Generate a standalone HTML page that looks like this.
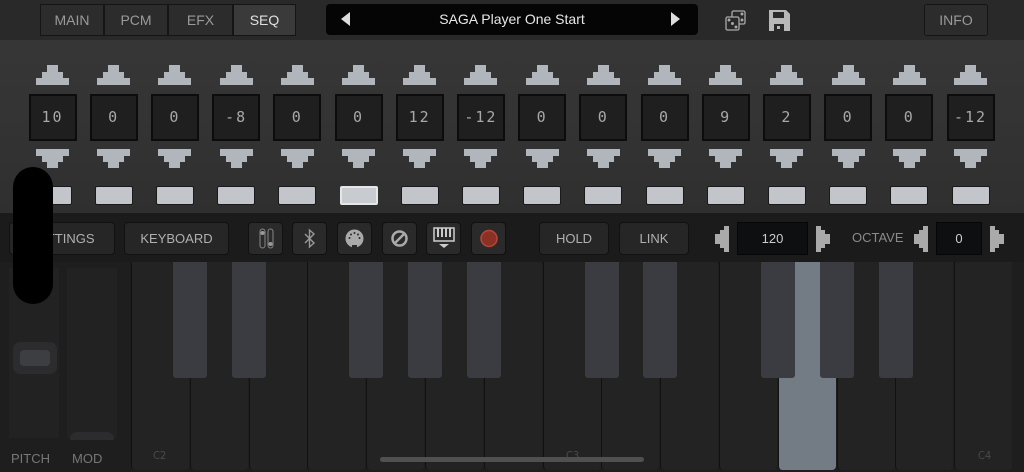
<!DOCTYPE html>
<html><head><style>
*{margin:0;padding:0;box-sizing:border-box}
body{width:1024px;height:472px;background:#1e1e1e;position:relative;overflow:hidden;font-family:"Liberation Sans",sans-serif}
.a{position:absolute}
.tab{position:absolute;top:4px;height:32px;background:#2c2c2c;border:1px solid #151515;color:#9a9a9a;font-size:14px;line-height:30px;text-align:center}
.btn{position:absolute;top:222px;height:33px;background:#262626;border:1px solid #111;border-radius:4px;color:#b0b0b0;font-size:13px;line-height:31px;text-align:center}
.ib{position:absolute;top:222px;width:35px;height:33px;background:#2a2a2a;border:1px solid #111;border-radius:4px}
.up,.dn{position:absolute;width:33px;height:20px}
.up i,.dn i{position:absolute;background:#b1b6bc;display:block}
.val{position:absolute;top:94px;width:48px;height:47px;background:#1f1f1f;border:2px solid #0c0c0c;color:#a8a8a8;font-family:"DejaVu Sans Mono",monospace;font-size:15px;letter-spacing:2px;line-height:43px;text-align:center}
.pad{position:absolute;top:186px;width:38px;height:19px;background:#c2c6ca;border:1px solid #1a1a1a;border-radius:2px}
.wk{position:absolute;top:262px;height:208px;width:58px;background:#232323;border-radius:0 0 4px 4px;border-left:1px solid #111}
.bk{position:absolute;top:262px;height:116px;width:34px;background:#3b3c41;border-radius:0 0 3px 3px}
.lbl{position:absolute;top:449px;font-size:11px;color:#4a4a4a;font-family:"DejaVu Sans Condensed",sans-serif}
</style></head><body>
<div class="a" style="left:0;top:0;width:1024px;height:40px;background:#292929"></div>
<div class="a" style="left:0;top:40px;width:1024px;height:173px;background:linear-gradient(#363636,#343434 40%,#2f2f2f)"></div>
<div class="tab" style="left:40px;width:64px">MAIN</div>
<div class="tab" style="left:104px;width:64px">PCM</div>
<div class="tab" style="left:168px;width:65px">EFX</div>
<div class="tab" style="left:233px;width:63px;background:#3a3a3a;color:#e0e0e0">SEQ</div>
<div class="a" style="left:326px;top:4px;width:372px;height:31px;background:#050505;border-radius:4px;color:#e8e8e8;font-size:14px;line-height:31px;text-align:center">SAGA Player One Start</div>
<div class="a" style="left:341px;top:12px;width:0;height:0;border-top:7px solid transparent;border-bottom:7px solid transparent;border-right:9px solid #ddd"></div>
<div class="a" style="left:671px;top:12px;width:0;height:0;border-top:7px solid transparent;border-bottom:7px solid transparent;border-left:9px solid #ddd"></div>
<svg class="a" style="left:724px;top:9px" width="24" height="24" viewBox="0 0 24 24" fill="none" stroke="#aaa" stroke-width="1.3"><rect x="8" y="2" width="13" height="13" rx="1.5"/><rect x="2" y="8" width="13" height="13" rx="1.5" fill="#292929"/><circle cx="5" cy="11" r=".8" fill="#aaa"/><circle cx="8.5" cy="14.5" r=".8" fill="#aaa"/><circle cx="12" cy="18" r=".8" fill="#aaa"/><circle cx="18" cy="5" r=".8" fill="#aaa"/><circle cx="18" cy="11" r=".8" fill="#aaa"/></svg>
<svg class="a" style="left:768px;top:9px" width="23" height="23" viewBox="0 0 23 23"><path d="M1 1h17l4 4v17H1z" fill="#b8b8b8"/><rect x="5" y="3" width="11" height="6" fill="#292929"/><rect x="6" y="15" width="10" height="7" fill="#292929"/><rect x="9" y="17" width="3" height="3" fill="#b8b8b8"/></svg>
<div class="tab" style="left:924px;width:64px;border-radius:3px">INFO</div>
<div id="cols"></div>
<div class="a" style="left:0;top:213px;width:1024px;height:49px;background:#1b1b1b"></div>
<div class="btn" style="left:9px;width:106px">SETTINGS</div>
<div class="btn" style="left:124px;width:105px">KEYBOARD</div>
<div class="ib" style="left:248px"><svg width="33" height="31"><rect x="11" y="6" width="5" height="19" rx="2.5" fill="none" stroke="#888"/><rect x="19" y="6" width="5" height="19" rx="2.5" fill="none" stroke="#888"/><circle cx="13.5" cy="10" r="2" fill="#999"/><circle cx="21.5" cy="21" r="2" fill="#999"/></svg></div>
<div class="ib" style="left:292px"><svg width="33" height="31"><path d="M12 11l9 9-4.5 4V7l4.5 4-9 9" fill="none" stroke="#999" stroke-width="1.4"/></svg></div>
<div class="ib" style="left:337px"><svg width="33" height="31"><circle cx="16.5" cy="15.5" r="9" fill="#aaa"/><rect x="14" y="22" width="5" height="3" fill="#2a2a2a"/><g fill="#2a2a2a"><circle cx="11.5" cy="15" r="1"/><circle cx="21.5" cy="15" r="1"/><circle cx="13" cy="11.5" r="1"/><circle cx="20" cy="11.5" r="1"/><circle cx="16.5" cy="10" r="1"/></g></svg></div>
<div class="ib" style="left:382px"><svg width="33" height="31"><circle cx="16.5" cy="15.5" r="7" fill="none" stroke="#aaa" stroke-width="2.5"/><path d="M12 20l9-9" stroke="#aaa" stroke-width="2.5"/></svg></div>
<div class="ib" style="left:426px"><svg width="33" height="31"><rect x="7" y="5" width="20" height="13" fill="none" stroke="#ccc" stroke-width="1.5"/><path d="M11 5v9M15 5v9M19 5v9M23 5v9" stroke="#ccc" stroke-width="2"/><path d="M12 21h10l-5 4z" fill="#ccc"/></svg></div>
<div class="ib" style="left:471px"><svg width="33" height="31"><circle cx="17" cy="15.5" r="8" fill="#8b3024" stroke="#b5473a" stroke-width="1.5"/></svg></div>
<div class="btn" style="left:539px;width:70px">HOLD</div>
<div class="btn" style="left:619px;width:70px">LINK</div>
<svg class="a" style="left:714px;top:226px" width="16" height="26"><path d="M15 0v26h-5v-4H6v-4H1V8h5V4h4V0z" fill="#aaa"/></svg>
<div class="a" style="left:737px;top:222px;width:71px;height:33px;background:#0d0f10;border:1px solid #060606;color:#ccc;font-size:13px;line-height:31px;text-align:center">120</div>
<svg class="a" style="left:815px;top:226px" width="16" height="26"><path d="M1 0v26h5v-4h4v-4h5V8h-5V4H6V0z" fill="#aaa"/></svg>
<div class="a" style="left:852px;top:230px;color:#8a8a8a;font-size:13px">OCTAVE</div>
<svg class="a" style="left:913px;top:226px" width="16" height="26"><path d="M15 0v26h-5v-4H6v-4H1V8h5V4h4V0z" fill="#aaa"/></svg>
<div class="a" style="left:936px;top:222px;width:46px;height:33px;background:#0d0f10;border:1px solid #060606;color:#ccc;font-size:13px;line-height:31px;text-align:center">0</div>
<svg class="a" style="left:989px;top:226px" width="16" height="26"><path d="M1 0v26h5v-4h4v-4h5V8h-5V4H6V0z" fill="#aaa"/></svg>
<div class="a" style="left:0;top:262px;width:131px;height:210px;background:#1e1e1e"></div>
<div class="a" style="left:9px;top:268px;width:50px;height:170px;background:#222"></div>
<div class="a" style="left:67px;top:268px;width:50px;height:170px;background:#222"></div>
<div class="a" style="left:13px;top:342px;width:44px;height:32px;border-radius:7px;background:#2c2c2e"><div class="a" style="left:7px;top:8px;width:30px;height:16px;border-radius:4px;background:#3d3e42"></div></div>
<div class="a" style="left:70px;top:432px;width:44px;height:8px;border-radius:7px 7px 0 0;background:#2c2c2e"></div>
<div class="a" style="left:11px;top:451px;color:#777;font-size:13px">PITCH</div>
<div class="a" style="left:72px;top:451px;color:#777;font-size:13px">MOD</div>
<div id="keys"></div>
<div class="a" style="left:13px;top:167px;width:40px;height:137px;border-radius:20px;background:#000"></div>
<div class="a" style="left:380px;top:457px;width:264px;height:5px;border-radius:3px;background:#505050"></div>
<script>
var h='';
for(var i=0;i<16;i++){var c=52.5+i*61.2,l=c-16.5;
h+='<div class="up" style="left:'+l+'px;top:65px"><i style="left:11px;top:0;width:11px;height:7px"></i><i style="left:6px;top:7px;width:21px;height:7px"></i><i style="left:0;top:13px;width:33px;height:7px"></i></div>';
h+='<div class="dn" style="left:'+l+'px;top:149px"><i style="left:0;top:0;width:33px;height:7px"></i><i style="left:6px;top:6px;width:21px;height:7px"></i><i style="left:11px;top:12px;width:11px;height:7px"></i></div>';
var v=[10,0,0,-8,0,0,12,-12,0,0,0,9,2,0,0,-12][i];
h+='<div class="val" style="left:'+(c-24)+'px">'+v+'</div>';
h+='<div class="pad" style="left:'+(c-19)+'px;'+(i==5?'background:#c8ccd0;border:2px solid #e4e6e8;':'')+'"></div>';}
document.getElementById('cols').innerHTML=h;
var k='';
for(var j=0;j<15;j++){var x=131+j*58.8;k+='<div class="wk" style="left:'+x+'px;'+(j==11?'background:#737b84;':'')+'"></div>';}
[173,232,349,408,467,585,643,761,820,879].forEach(function(x){k+='<div class="bk" style="left:'+x+'px"></div>';});
k+='<div class="a" style="left:795px;top:262px;width:25px;height:116px;background:#737b84"></div>';
k+='<div class="lbl" style="left:153px">C2</div><div class="lbl" style="left:566px">C3</div><div class="lbl" style="left:978px">C4</div>';
document.getElementById('keys').innerHTML=k;
</script>
</body></html>
